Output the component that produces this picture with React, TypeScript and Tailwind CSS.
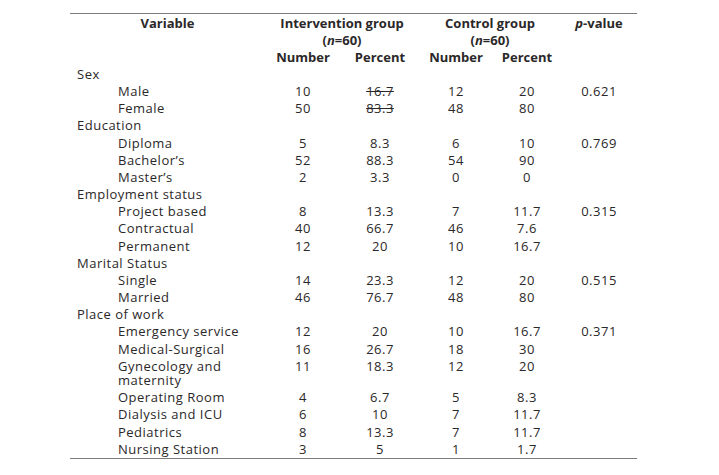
type Row = {
  label: string
  sub?: boolean
  n1?: string
  p1?: string
  n2?: string
  p2?: string
  pv?: string
  strike?: boolean
  wrap?: boolean
}

const rows: Row[] = [
  { label: 'Sex' },
  { label: 'Male', sub: true, n1: '10', p1: '16.7', n2: '12', p2: '20', pv: '0.621', strike: true },
  { label: 'Female', sub: true, n1: '50', p1: '83.3', n2: '48', p2: '80', strike: true },
  { label: 'Education' },
  { label: 'Diploma', sub: true, n1: '5', p1: '8.3', n2: '6', p2: '10', pv: '0.769' },
  { label: 'Bachelor’s', sub: true, n1: '52', p1: '88.3', n2: '54', p2: '90' },
  { label: 'Master’s', sub: true, n1: '2', p1: '3.3', n2: '0', p2: '0' },
  { label: 'Employment status' },
  { label: 'Project based', sub: true, n1: '8', p1: '13.3', n2: '7', p2: '11.7', pv: '0.315' },
  { label: 'Contractual', sub: true, n1: '40', p1: '66.7', n2: '46', p2: '7.6' },
  { label: 'Permanent', sub: true, n1: '12', p1: '20', n2: '10', p2: '16.7' },
  { label: 'Marital Status' },
  { label: 'Single', sub: true, n1: '14', p1: '23.3', n2: '12', p2: '20', pv: '0.515' },
  { label: 'Married', sub: true, n1: '46', p1: '76.7', n2: '48', p2: '80' },
  { label: 'Place of work' },
  { label: 'Emergency service', sub: true, n1: '12', p1: '20', n2: '10', p2: '16.7', pv: '0.371' },
  { label: 'Medical-Surgical', sub: true, n1: '16', p1: '26.7', n2: '18', p2: '30' },
  { label: 'Gynecology and maternity', sub: true, n1: '11', p1: '18.3', n2: '12', p2: '20', wrap: true },
  { label: 'Operating Room', sub: true, n1: '4', p1: '6.7', n2: '5', p2: '8.3' },
  { label: 'Dialysis and ICU', sub: true, n1: '6', p1: '10', n2: '7', p2: '11.7' },
  { label: 'Pediatrics', sub: true, n1: '8', p1: '13.3', n2: '7', p2: '11.7' },
  { label: 'Nursing Station', sub: true, n1: '3', p1: '5', n2: '1', p2: '1.7' },
]

const grid = 'grid grid-cols-[195px_76px_78px_74px_68px_76px]'

function DataRow({ r }: { r: Row }) {
  return (
    <div className={`${grid} leading-[17.15px] tracking-[0.5px]`}>
      <div className={r.sub ? 'pl-[48px]' : 'pl-[7px]'}>
        {r.wrap ? (
          <div className="leading-[14.5px] py-[1.3px]">
            Gynecology and
            <br />
            maternity
          </div>
        ) : (
          r.label
        )}
      </div>
      <div className="text-center">{r.n1}</div>
      <div className={`text-center ${r.strike ? 'line-through' : ''}`}>{r.p1}</div>
      <div className="text-center">{r.n2}</div>
      <div className="text-center">{r.p2}</div>
      <div className="text-center">{r.pv}</div>
    </div>
  )
}

export default function App() {
  return (
    <div className="w-[719px] h-[475px] bg-white pt-[13px] pl-[70px] text-[13px] text-[#2b2829] font-['Open_Sans',sans-serif]">
      <div className="w-[567px] border-t-[1.5px] border-b-[1.5px] border-[#7d7d7d]">
        <div className={`${grid} font-bold leading-[17px] pt-px`}>
          <div className="text-center">Variable</div>
          <div className="col-span-2 text-center">
            Intervention group
            <br />
            (<i>n</i>=60)
          </div>
          <div className="col-span-2 text-center">
            Control group
            <br />
            (<i>n</i>=60)
          </div>
          <div className="text-center">
            <i>p</i>-value
          </div>
          <div />
          <div className="text-center">Number</div>
          <div className="text-center">Percent</div>
          <div className="text-center">Number</div>
          <div className="text-center">Percent</div>
          <div />
        </div>
        {rows.map((r, i) => (
          <DataRow key={i} r={r} />
        ))}
      </div>
    </div>
  )
}
